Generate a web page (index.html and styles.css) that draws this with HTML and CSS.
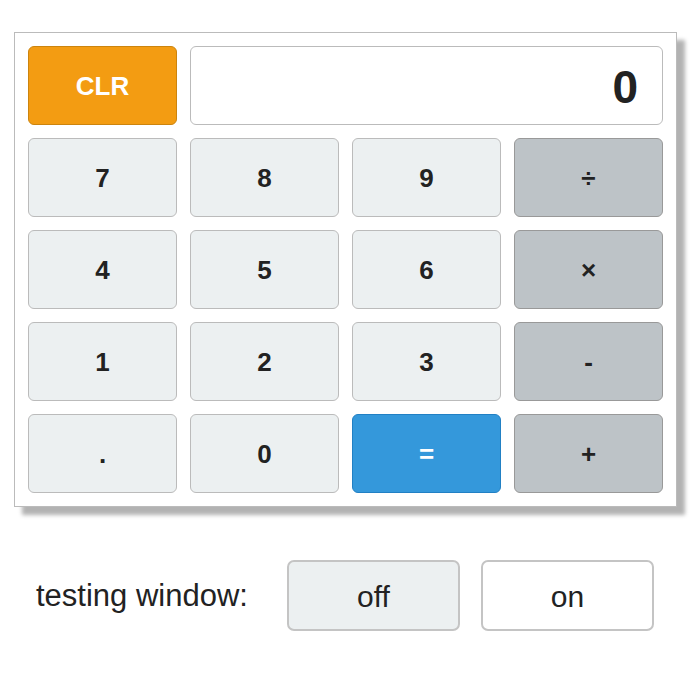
FILE: index.html
```html
<!DOCTYPE html>
<html>
<head>
<meta charset="utf-8">
<link rel="stylesheet" href="styles.css">
</head>
<body>
<div class="calc">
  <button class="key clr">CLR</button>
  <div class="display">0</div>
  <button class="key num">7</button>
  <button class="key num">8</button>
  <button class="key num">9</button>
  <button class="key op">÷</button>
  <button class="key num">4</button>
  <button class="key num">5</button>
  <button class="key num">6</button>
  <button class="key op">×</button>
  <button class="key num">1</button>
  <button class="key num">2</button>
  <button class="key num">3</button>
  <button class="key op">-</button>
  <button class="key num">.</button>
  <button class="key num">0</button>
  <button class="key eq">=</button>
  <button class="key op">+</button>
</div>
<div class="testing">
  <span class="label">testing window:</span>
  <button class="toggle off">off</button>
  <button class="toggle on">on</button>
</div>
</body>
</html>
```
FILE: styles.css
```css
html, body {
  margin: 0;
  padding: 0;
  background: #fff;
}
body {
  width: 700px;
  height: 700px;
  font-family: "Liberation Sans", Arial, sans-serif;
  color: #222;
}
.calc {
  margin: 32px 0 0 14px;
  width: 635px;
  padding: 13px;
  border: 1px solid #bbb;
  background: #fff;
  box-shadow: 8px 8px 4px rgba(0, 0, 0, 0.3);
  display: grid;
  grid-template-columns: repeat(4, 149px);
  grid-auto-rows: 79px;
  gap: 13px;
}
.key {
  font-family: "Liberation Sans", Arial, sans-serif;
  font-weight: bold;
  font-size: 26px;
  color: #222;
  border: 1.5px solid #bbb;
  border-radius: 6px;
  background: #ecf0f1;
  padding: 2px 0 0;
  margin: 0;
  box-sizing: border-box;
  width: 149px;
  height: 79px;
}
.clr {
  background: #f39c12;
  border-color: #cc840e;
  color: #fff;
}
.op {
  background: #bdc3c7;
  border-color: #999;
}
.eq {
  background: #3498db;
  border-color: #2180c4;
  color: #fff;
}
.display {
  grid-column: span 3;
  box-sizing: border-box;
  border: 1.5px solid #bbb;
  border-radius: 6px;
  background: #fff;
  display: flex;
  align-items: center;
  justify-content: flex-end;
  padding: 2px 24px 0 0;
  font-weight: bold;
  font-size: 46px;
  color: #222;
}
.testing {
  margin-top: 53px;
  padding-left: 36px;
  display: flex;
  align-items: center;
}
.label {
  font-size: 31px;
  width: 251px;
}
.toggle {
  font-family: "Liberation Sans", Arial, sans-serif;
  font-size: 30px;
  color: #222;
  width: 173px;
  height: 71px;
  box-sizing: border-box;
  border: 2px solid #c4c4c4;
  border-radius: 7px;
  padding: 2px 0 0;
  margin: 0 21px 0 0;
}
.off {
  background: #ecf0f1;
}
.on {
  background: #fff;
}
```
